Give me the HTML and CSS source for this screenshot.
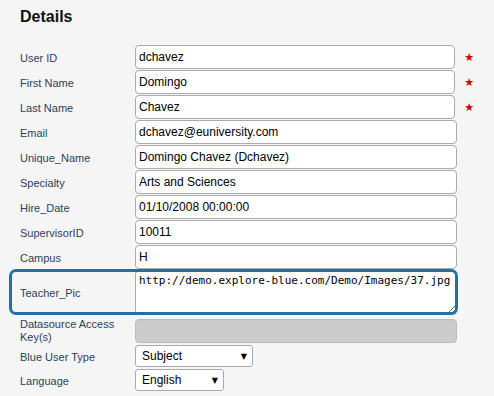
FILE: index.html
```html
<!DOCTYPE html>
<html lang="en">
<head>
    <meta charset="UTF-8">
    <meta name="viewport" content="width=device-width, initial-scale=1.0">
    <title>Details</title>
    <link rel="stylesheet" href="styles.css">
</head>
<body>
    <h2 class="titulo">Details</h2>
    <form class="detalles">
        <div class="fila">
            <label class="etiqueta">User ID</label>
            <input class="campo" value="dchavez">
            <span class="requerido">★</span>
        </div>
        <div class="fila">
            <label class="etiqueta">First Name</label>
            <input class="campo" value="Domingo">
            <span class="requerido">★</span>
        </div>
        <div class="fila">
            <label class="etiqueta">Last Name</label>
            <input class="campo" value="Chavez">
            <span class="requerido">★</span>
        </div>
        <div class="fila">
            <label class="etiqueta">Email</label>
            <input class="campo" value="dchavez@euniversity.com">
        </div>
        <div class="fila">
            <label class="etiqueta">Unique_Name</label>
            <input class="campo" value="Domingo Chavez (Dchavez)">
        </div>
        <div class="fila">
            <label class="etiqueta">Specialty</label>
            <input class="campo" value="Arts and Sciences">
        </div>
        <div class="fila">
            <label class="etiqueta">Hire_Date</label>
            <input class="campo" value="01/10/2008 00:00:00">
        </div>
        <div class="fila">
            <label class="etiqueta">SupervisorID</label>
            <input class="campo" value="10011">
        </div>
        <div class="fila">
            <label class="etiqueta">Campus</label>
            <input class="campo" value="H">
        </div>
        <div class="fila fila-foto">
            <label class="etiqueta">Teacher_Pic</label>
            <textarea class="campo area">http://demo.explore-blue.com/Demo/Images/37.jpg</textarea>
        </div>
        <div class="fila fila-clave">
            <label class="etiqueta">Datasource Access Key(s)</label>
            <input class="campo" disabled>
        </div>
        <div class="fila fila-lista">
            <label class="etiqueta">Blue User Type</label>
            <div class="lista">
                <select class="selector ancho">
                    <option>Subject</option>
                </select>
            </div>
        </div>
        <div class="fila fila-lista">
            <label class="etiqueta">Language</label>
            <div class="lista">
                <select class="selector corto">
                    <option>English</option>
                </select>
            </div>
        </div>
    </form>
</body>
</html>
```

FILE: styles.css
```css
body {
    margin: 0;
    padding: 7px 20px;
    background: #f5f5f5;
    font-family: "Liberation Sans", Arial, sans-serif;
}

.titulo {
    margin: 0 0 18px;
    font-size: 16px;
    line-height: 20px;
    font-weight: bold;
    color: #111;
}

.fila {
    display: flex;
    align-items: center;
    margin-bottom: 1px;
}

.etiqueta {
    width: 115px;
    flex-shrink: 0;
    padding-top: 2px;
    font-size: 11px;
    line-height: 13px;
    color: #2e3d58;
}

.campo {
    box-sizing: border-box;
    width: 322px;
    height: 24px;
    margin: 0;
    padding: 0 3px;
    border: 1px solid #aaa;
    border-radius: 4px;
    background: #fff;
    font: 12px "Liberation Sans", Arial, sans-serif;
    color: #000;
}

.campo:disabled {
    background: #ccc;
    border-color: #bbb;
}

.requerido {
    margin-left: 9px;
    color: #d00000;
    font: 11px "DejaVu Sans", sans-serif;
}

.fila-foto {
    position: relative;
    width: 437px;
    margin-bottom: 3px;
}

.fila-foto::before {
    content: "";
    position: absolute;
    top: -1px;
    bottom: 0;
    left: -11px;
    right: -1px;
    border: 3px solid #2570a1;
    border-radius: 7px;
    pointer-events: none;
}

.area {
    height: 45px;
    padding: 3px;
    font: 11px "DejaVu Sans Mono", monospace;
    line-height: 13px;
    resize: vertical;
}

.fila-clave .etiqueta {
    padding-top: 0;
}

.fila-lista {
    margin-bottom: 2px;
}

.lista {
    position: relative;
}

.lista::after {
    content: "▼";
    position: absolute;
    right: 6px;
    top: 50%;
    transform: translateY(-50%);
    font: 8px "DejaVu Sans", sans-serif;
    color: #000;
    pointer-events: none;
}

.selector {
    -webkit-appearance: none;
    appearance: none;
    box-sizing: border-box;
    height: 22px;
    margin: 0;
    padding: 0 0 0 6px;
    border: 1px solid #aaa;
    border-radius: 3px;
    background: #fff;
    font: 12px "Liberation Sans", Arial, sans-serif;
    color: #000;
}

.selector.ancho {
    width: 118px;
}

.selector.corto {
    width: 89px;
}
```
